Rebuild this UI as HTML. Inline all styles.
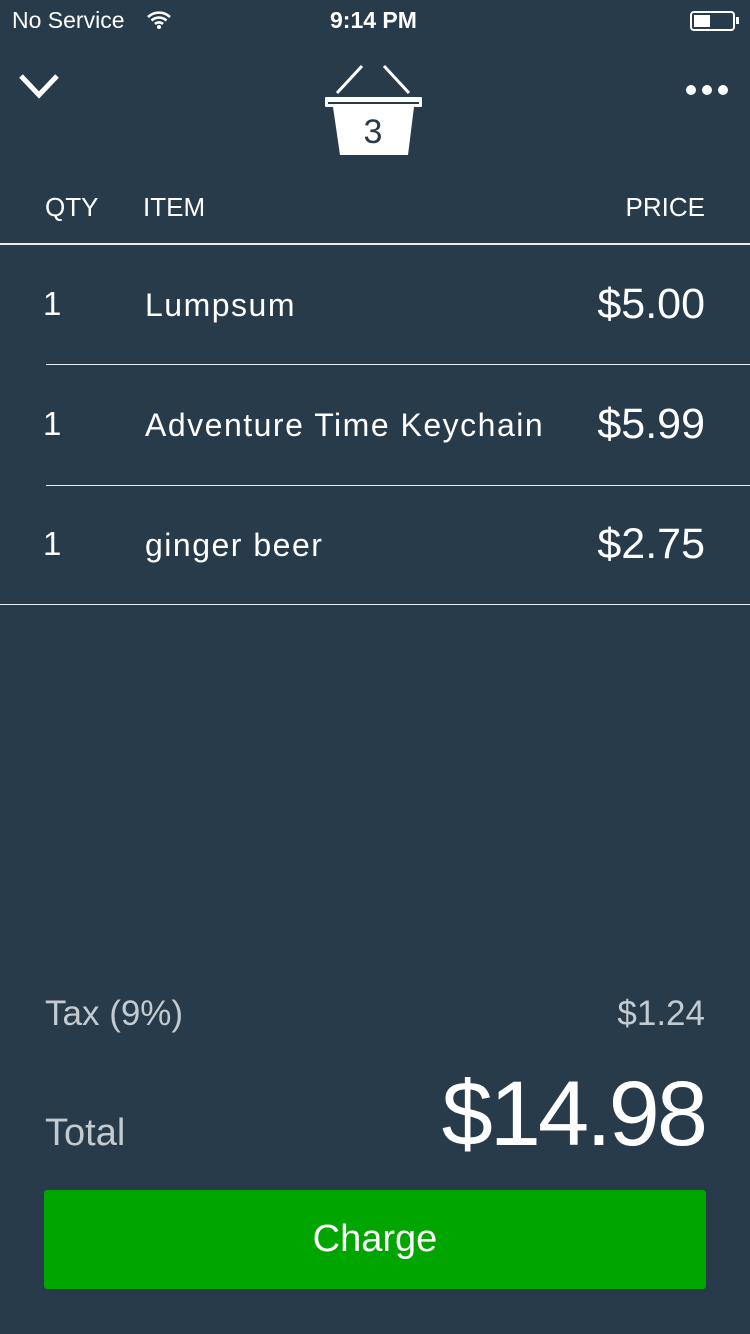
<!DOCTYPE html>
<html><head><style>
*{margin:0;padding:0;box-sizing:border-box}
body{width:750px;height:1334px;background:#283b4a;font-family:"Liberation Sans",sans-serif;color:#fff;position:relative;overflow:hidden}
.a{position:absolute;white-space:nowrap}
.line{position:absolute;height:2px;background:#e8ecef;right:0}
.it{letter-spacing:1.5px}
</style></head><body>
<div class="a" style="left:12px;top:7px;font-size:23px">No Service</div>
<svg class="a" style="left:146px;top:10px" width="26" height="20" viewBox="0 0 26 20"><path d="M2 7a16 16 0 0 1 22 0M5.5 10.5a11 11 0 0 1 15 0M9 14a6 6 0 0 1 8 0" stroke="#fff" stroke-width="2.6" fill="none"/><circle cx="13" cy="17" r="2" fill="#fff"/></svg>
<div class="a" style="left:330px;top:7px;font-size:23px;font-weight:bold">9:14 PM</div>
<div class="a" style="left:690px;top:11px;width:45px;height:20px;border:2px solid #fff;border-radius:4px"><div style="position:absolute;left:2px;top:2px;width:16px;height:12px;background:#fff"></div></div>
<div class="a" style="left:736px;top:17px;width:3px;height:7px;background:#fff"></div>
<svg class="a" style="left:18px;top:72px" width="42" height="28"><path d="M3 4L21 23L39 4" stroke="#fff" stroke-width="5" fill="none"/></svg>
<svg class="a" style="left:684px;top:82px" width="46" height="16"><circle cx="7" cy="8" r="5" fill="#fff"/><circle cx="23" cy="8" r="5" fill="#fff"/><circle cx="39" cy="8" r="5" fill="#fff"/></svg>
<svg class="a" style="left:320px;top:60px" width="110" height="100"><path d="M17 33L42 6M64 6L89 33" stroke="#fff" stroke-width="3" fill="none"/><rect x="5" y="37" width="97" height="10" rx="1" fill="#fff"/><rect x="8" y="42" width="91" height="2" fill="#283b4a"/><path d="M13 47H94L88 95H20Z" fill="#fff"/><text x="53" y="83" font-size="34" text-anchor="middle" fill="#283b4a" font-family="Liberation Sans">3</text></svg>
<div class="a" style="left:45px;top:192px;font-size:26px">QTY</div>
<div class="a" style="left:143px;top:192px;font-size:26px">ITEM</div>
<div class="a" style="right:45px;top:192px;font-size:26px">PRICE</div>
<div class="line" style="left:0;top:243px"></div>
<div class="a" style="left:43px;top:285px;font-size:33px">1</div>
<div class="a it" style="left:145px;top:287px;font-size:32px">Lumpsum</div>
<div class="a" style="right:45px;top:280px;font-size:43px">$5.00</div>
<div class="line" style="left:46px;top:364px;height:1px"></div>
<div class="a" style="left:43px;top:405px;font-size:33px">1</div>
<div class="a it" style="left:145px;top:407px;font-size:32px">Adventure Time Keychain</div>
<div class="a" style="right:45px;top:400px;font-size:43px">$5.99</div>
<div class="line" style="left:46px;top:485px;height:1px"></div>
<div class="a" style="left:43px;top:525px;font-size:33px">1</div>
<div class="a it" style="left:145px;top:527px;font-size:32px">ginger beer</div>
<div class="a" style="right:45px;top:520px;font-size:43px">$2.75</div>
<div class="line" style="left:0;top:604px;height:1px"></div>
<div class="a" style="left:45px;top:994px;font-size:35px;color:#c3cad0">Tax (9%)</div>
<div class="a" style="right:45px;top:994px;font-size:35px;color:#c3cad0">$1.24</div>
<div class="a" style="left:45px;top:1112px;font-size:38px;color:#c3cad0">Total</div>
<div class="a" style="right:45px;top:1062px;font-size:92px;letter-spacing:-3px">$14.98</div>
<div class="a" style="left:44px;top:1190px;width:662px;height:99px;background:#00a500;border-radius:3px;text-align:center;line-height:99px;font-size:38px">Charge</div>
</body></html>
